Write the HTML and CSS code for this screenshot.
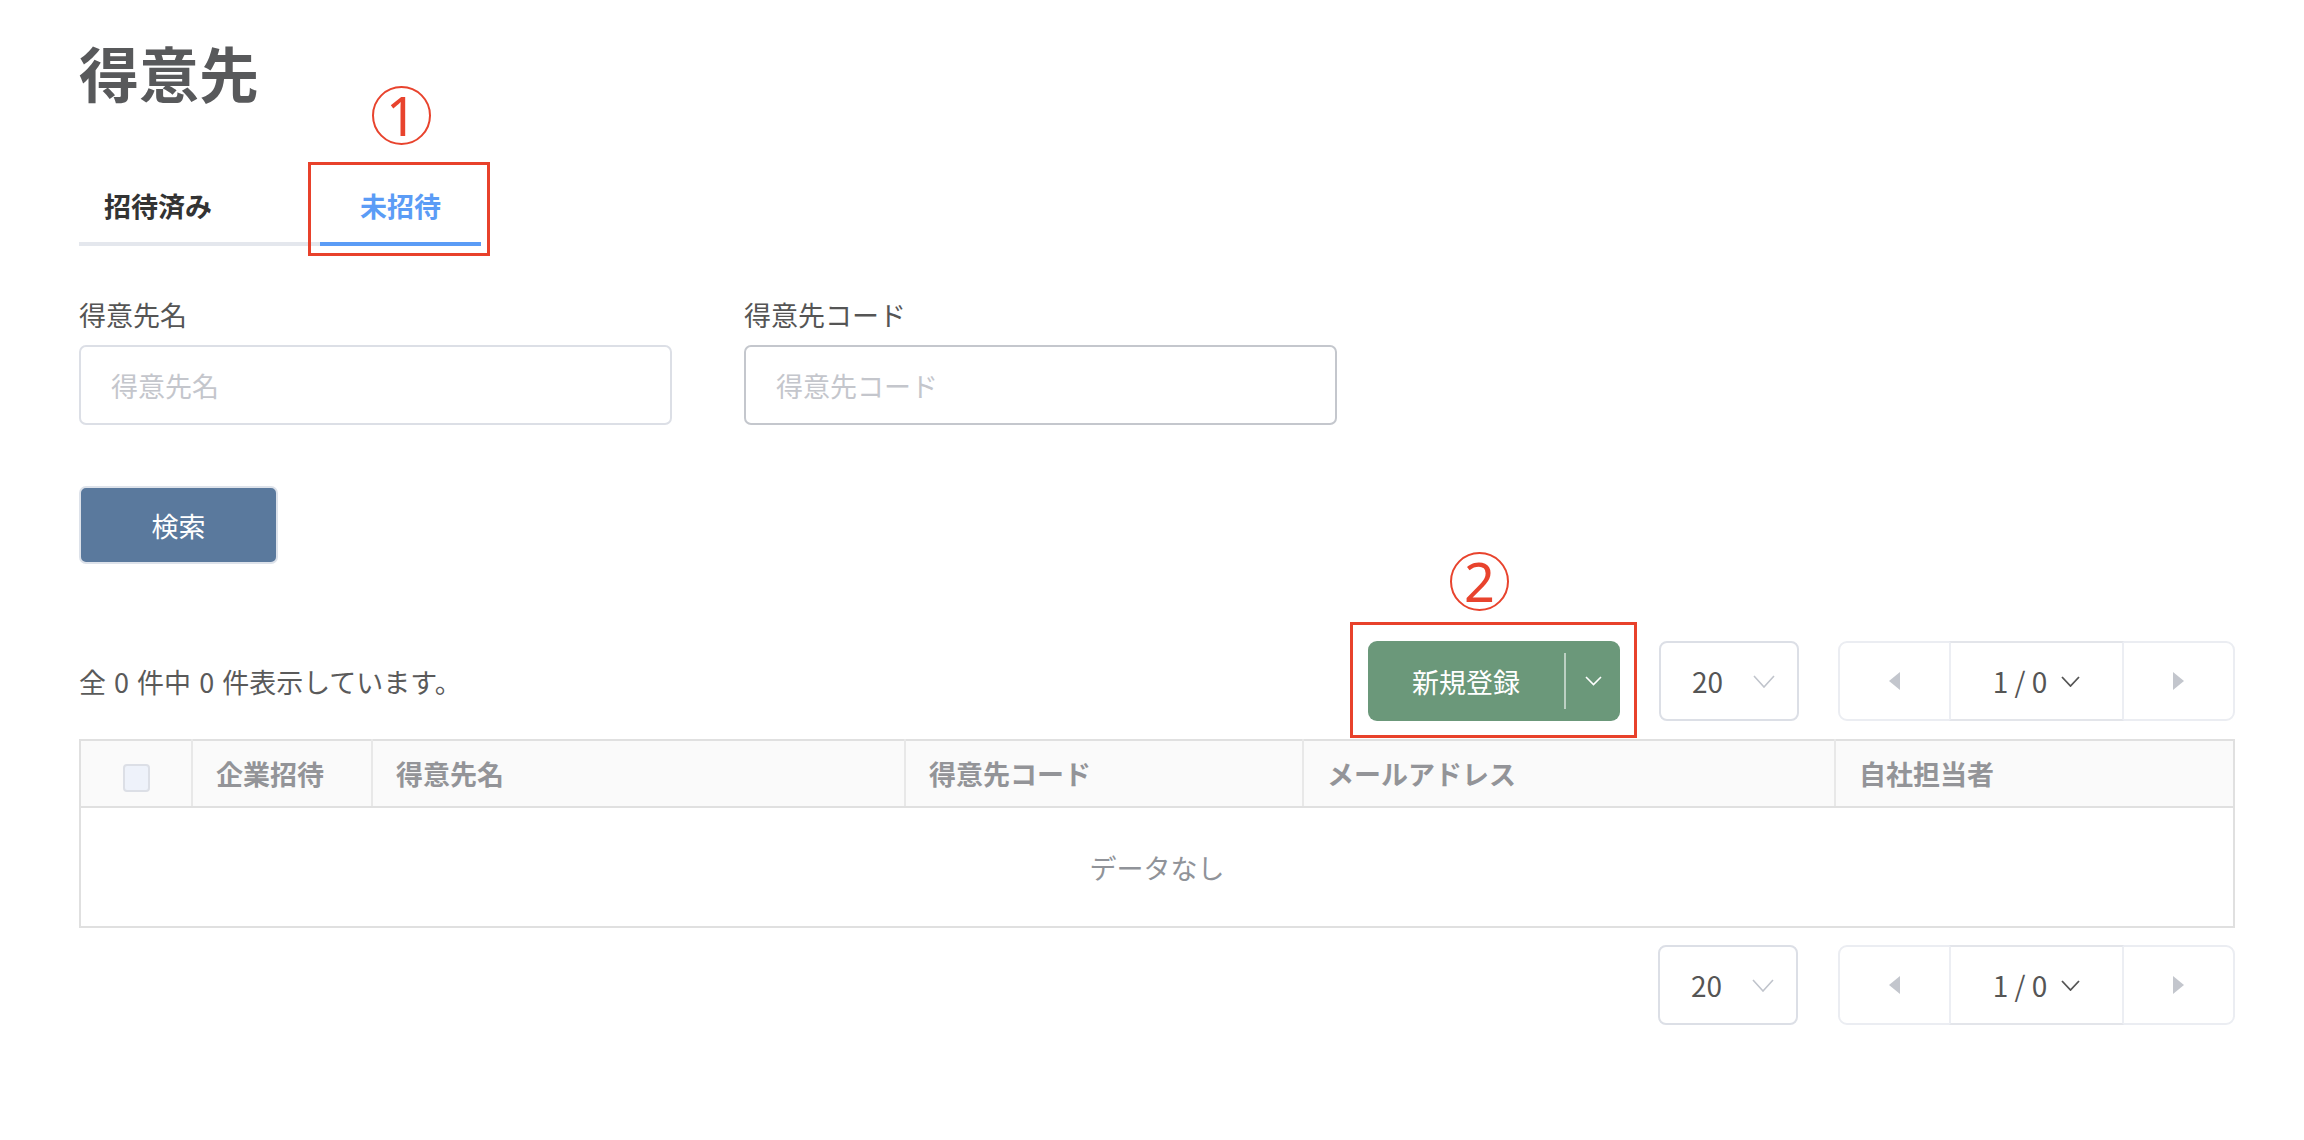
FILE: index.html
```html
<!DOCTYPE html>
<html lang="ja">
<head>
<meta charset="utf-8">
<title>得意先</title>
<link rel="stylesheet" href="styles.css">
</head>
<body>
<div class="page">
  <h1 class="title">得意先</h1>

  <div class="tabs">
    <div class="tab tab-invited">招待済み</div>
    <div class="tab tab-uninvited">未招待
      <span class="mark-box mark-box-tab"></span>
      <span class="num num-tab">1</span>
    </div>
  </div>

  <div class="fields">
    <div class="field">
      <div class="label">得意先名</div>
      <input class="input" type="text" placeholder="得意先名">
    </div>
    <div class="field">
      <div class="label">得意先コード</div>
      <input class="input input-hover" type="text" placeholder="得意先コード">
    </div>
  </div>

  <button class="search-btn" type="button">検索</button>

  <div class="toolbar">
    <div class="count">全 0 件中 0 件表示しています。</div>
    <div class="controls">
      <div class="split-wrap">
        <div class="split">
          <span class="split-main">新規登録</span>
          <span class="split-divider"></span>
          <span class="split-drop">
            <svg width="17" height="10" viewBox="0 0 17 10"><polyline points="1,1 8.5,8.5 16,1" fill="none" stroke="#ffffff" stroke-width="1.6"/></svg>
          </span>
        </div>
        <span class="mark-box mark-box-split"></span>
        <span class="num num-split">2</span>
      </div>
      <div class="size-select">
        <span>20</span>
        <svg width="22" height="13" viewBox="0 0 22 13"><polyline points="1,1 11,12 21,1" fill="none" stroke="#c0c4cc" stroke-width="1.6"/></svg>
      </div>
      <div class="pager">
        <span class="pager-btn"><span class="tri tri-left"></span></span>
        <span class="pager-page">1 / 0
          <svg width="19" height="11" viewBox="0 0 19 11"><polyline points="1,1 9.5,10 18,1" fill="none" stroke="#555555" stroke-width="1.8"/></svg>
        </span>
        <span class="pager-btn"><span class="tri tri-right"></span></span>
      </div>
    </div>
  </div>

  <table class="grid">
    <colgroup>
      <col class="c1"><col class="c2"><col class="c3"><col class="c4"><col class="c5"><col class="c6">
    </colgroup>
    <thead>
      <tr>
        <th class="th-check"><span class="checkbox"></span></th>
        <th>企業招待</th>
        <th>得意先名</th>
        <th>得意先コード</th>
        <th>メールアドレス</th>
        <th>自社担当者</th>
      </tr>
    </thead>
    <tbody>
      <tr><td class="empty" colspan="6">データなし</td></tr>
    </tbody>
  </table>

  <div class="bottom-controls">
    <div class="size-select">
      <span>20</span>
      <svg width="22" height="13" viewBox="0 0 22 13"><polyline points="1,1 11,12 21,1" fill="none" stroke="#c0c4cc" stroke-width="1.6"/></svg>
    </div>
    <div class="pager">
      <span class="pager-btn"><span class="tri tri-left"></span></span>
      <span class="pager-page">1 / 0
        <svg width="19" height="11" viewBox="0 0 19 11"><polyline points="1,1 9.5,10 18,1" fill="none" stroke="#555555" stroke-width="1.8"/></svg>
      </span>
      <span class="pager-btn"><span class="tri tri-right"></span></span>
    </div>
  </div>
</div>
</body>
</html>
```

FILE: styles.css
```css
html, body {
  margin: 0;
  background: #ffffff;
}

body {
  font-family: "Noto Sans CJK JP", "Noto Sans", sans-serif;
  color: #555555;
}

.page {
  padding: 0 69px 0 79px;
}

.title {
  margin: 0;
  padding-top: 35px;
  height: 74px;
  font-size: 60px;
  line-height: 74px;
  font-weight: 700;
  color: #58595b;
}

/* tabs */
.tabs {
  display: flex;
  margin-top: 61px;
}

.tab {
  height: 72px;
  line-height: 72px;
  font-size: 27px;
  font-weight: 700;
  color: #333333;
  border-bottom: 4px solid #e4e7ed;
}

.tab-invited {
  width: 216px;
  padding-left: 25px;
}

.tab-uninvited {
  position: relative;
  width: 161px;
  text-align: center;
  color: #5b9cf6;
  border-bottom-color: #5b9cf6;
}

/* annotation marks */
.mark-box {
  position: absolute;
  box-sizing: border-box;
  border: 3px solid #e8412b;
}

.mark-box-tab {
  left: -12px;
  top: -8px;
  width: 182px;
  height: 94px;
}

.num {
  position: absolute;
  box-sizing: border-box;
  width: 59px;
  height: 59px;
  border: 2px solid #e8432d;
  border-radius: 50%;
  color: #e8432d;
  font-family: "Noto Sans", sans-serif;
  font-size: 54px;
  font-weight: 400;
  line-height: 55px;
  text-align: center;
}

.num-tab {
  left: 52px;
  top: -84px;
}

/* fields */
.fields {
  display: flex;
  gap: 72px;
  margin-top: 51px;
}

.field {
  width: 593px;
  display: flex;
  flex-direction: column;
  gap: 12px;
}

.label {
  font-size: 27px;
  line-height: 36px;
  color: #555555;
}

.input {
  box-sizing: border-box;
  width: 100%;
  height: 80px;
  margin: 0;
  padding: 0 30px;
  border: 2px solid #dcdfe6;
  border-radius: 7px;
  font-family: inherit;
  font-size: 27px;
  color: #555555;
  outline: none;
}

.input-hover {
  border-color: #c4c7cd;
}

.input::placeholder {
  color: #c4c6cc;
}

/* search button */
.search-btn {
  display: block;
  box-sizing: border-box;
  width: 199px;
  height: 78px;
  margin-top: 61px;
  padding: 0;
  border: 2px solid #dde2ea;
  border-radius: 7px;
  background: #5a799d;
  color: #ffffff;
  font-family: inherit;
  font-size: 27px;
}

/* toolbar */
.toolbar {
  display: flex;
  justify-content: space-between;
  align-items: center;
  height: 80px;
  margin-top: 77px;
}

.count {
  font-size: 27px;
  word-spacing: 2px;
  color: #5a5a5a;
}

.controls {
  display: flex;
  align-items: center;
  gap: 39px;
}

.split-wrap {
  position: relative;
}

.split {
  display: flex;
  align-items: center;
  width: 252px;
  height: 80px;
  border-radius: 9px;
  background: #6b987a;
  color: #ffffff;
}

.split-main {
  width: 196px;
  text-align: center;
  font-size: 27px;
}

.split-divider {
  width: 2px;
  height: 56px;
  background: rgba(255, 255, 255, 0.55);
}

.split-drop {
  flex: 1;
  display: flex;
  justify-content: center;
  align-items: center;
}

.mark-box-split {
  left: -18px;
  top: -19px;
  width: 287px;
  height: 116px;
}

.num-split {
  left: 82px;
  top: -89px;
}

.size-select {
  box-sizing: border-box;
  display: flex;
  align-items: center;
  justify-content: space-between;
  width: 140px;
  height: 80px;
  padding: 0 22px 0 31px;
  border: 2px solid #dcdfe6;
  border-radius: 8px;
  font-size: 28px;
  color: #555555;
}

.pager {
  box-sizing: border-box;
  display: flex;
  width: 397px;
  height: 80px;
  border: 2px solid #ebedf2;
  border-radius: 9px;
}

.pager-btn {
  width: 110px;
  display: flex;
  align-items: center;
  justify-content: center;
}

.pager-page {
  box-sizing: border-box;
  width: 175px;
  margin: -2px 0;
  display: flex;
  align-items: center;
  justify-content: center;
  gap: 14px;
  border: 2px solid #e3e5ea;
  border-left-color: #eceef3;
  border-right-color: #eceef3;
  font-size: 28px;
  color: #555555;
}

.tri {
  width: 0;
  height: 0;
  border-top: 9px solid transparent;
  border-bottom: 9px solid transparent;
}

.tri-left {
  border-right: 11px solid #c3c6cd;
}

.tri-right {
  border-left: 11px solid #c3c6cd;
}

/* table */
.grid {
  width: 100%;
  margin-top: 18px;
  table-layout: fixed;
  border-collapse: collapse;
  border: 2px solid #e0e0e0;
}

.c1 { width: 112px; }
.c2 { width: 180px; }
.c3 { width: 533px; }
.c4 { width: 398px; }
.c5 { width: 532px; }
.c6 { width: auto; }

.grid th {
  height: 65px;
  padding: 0 0 0 23px;
  background: #fafafa;
  border-right: 2px solid #e8e8e8;
  border-bottom: 2px solid #e0e0e0;
  text-align: left;
  font-size: 27px;
  font-weight: 700;
  color: #939498;
}

.grid th:last-child {
  border-right: none;
}

.grid .th-check {
  padding: 0;
  text-align: center;
}

.checkbox {
  display: inline-block;
  box-sizing: border-box;
  width: 27px;
  height: 28px;
  vertical-align: middle;
  border: 2px solid #dcdfe6;
  border-radius: 4px;
  background: #eef2fa;
}

.grid td.empty {
  height: 118px;
  padding: 0;
  text-align: center;
  font-size: 27px;
  color: #909399;
}

.bottom-controls {
  display: flex;
  justify-content: flex-end;
  gap: 40px;
  margin-top: 17px;
}
```
